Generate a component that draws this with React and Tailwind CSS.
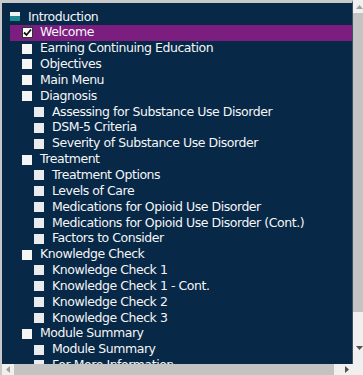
import React from 'react';

const rows = [
  { label: 'Introduction', level: 0 },
  { label: 'Welcome', level: 1, checked: true, active: true },
  { label: 'Earning Continuing Education', level: 1 },
  { label: 'Objectives', level: 1 },
  { label: 'Main Menu', level: 1 },
  { label: 'Diagnosis', level: 1 },
  { label: 'Assessing for Substance Use Disorder', level: 2 },
  { label: 'DSM-5 Criteria', level: 2 },
  { label: 'Severity of Substance Use Disorder', level: 2 },
  { label: 'Treatment', level: 1 },
  { label: 'Treatment Options', level: 2 },
  { label: 'Levels of Care', level: 2 },
  { label: 'Medications for Opioid Use Disorder', level: 2 },
  { label: 'Medications for Opioid Use Disorder (Cont.)', level: 2 },
  { label: 'Factors to Consider', level: 2 },
  { label: 'Knowledge Check', level: 1 },
  { label: 'Knowledge Check 1', level: 2 },
  { label: 'Knowledge Check 1 - Cont.', level: 2 },
  { label: 'Knowledge Check 2', level: 2 },
  { label: 'Knowledge Check 3', level: 2 },
  { label: 'Module Summary', level: 1 },
  { label: 'Module Summary', level: 2 },
  { label: 'For More Information', level: 2 },
];

const SectionIcon = () => (
  <span className="flex flex-col w-[10px] h-[9px] shrink-0">
    <span className="h-[4px] bg-[#eef2f2]" />
    <span className="flex-1 bg-[#1c8b95]" />
  </span>
);

const Box = ({ checked, level }) =>
  checked ? (
    <span className="w-[11px] h-[11px] shrink-0 bg-white border border-[#333] flex items-center justify-center">
      <svg width="9" height="9" viewBox="0 0 9 9">
        <path d="M1 4.5 L3.5 7 L8 1.5" fill="none" stroke="#111" strokeWidth="1.8" />
      </svg>
    </span>
  ) : (
    <span className={`w-[10px] h-[10px] shrink-0 ${level === 2 ? 'bg-[#e9ebed]' : 'bg-[#f5f5f5]'}`} />
  );

const Row = ({ row }) => {
  if (row.active) {
    return (
      <div className="h-[15.85px] flex items-center ml-[8px] pl-[12px] bg-[#7c1e7f]">
        <Box checked />
        <span className="whitespace-nowrap ml-[7px]">{row.label}</span>
      </div>
    );
  }
  const pad = row.level === 0 ? 'pl-[8px]' : row.level === 1 ? 'pl-[20px]' : 'pl-[32px]';
  return (
    <div className={`h-[15.85px] flex items-center ${pad}`}>
      {row.level === 0 ? <SectionIcon /> : <Box level={row.level} />}
      <span className="whitespace-nowrap ml-[8px]">{row.label}</span>
    </div>
  );
};

const Tri = ({ dir }) => {
  const pts = {
    up: '0,4 3.5,0 7,4',
    down: '0,0 7,0 3.5,4',
    left: '4,0 4,7 0,3.5',
    right: '0,0 4,3.5 0,7',
  }[dir];
  const vert = dir === 'up' || dir === 'down';
  return (
    <svg width={vert ? 7 : 4} height={vert ? 4 : 7} viewBox={vert ? '0 0 7 4' : '0 0 4 7'}>
      <polygon points={pts} fill={dir === 'up' || dir === 'left' ? '#a0a0a0' : '#505050'} />
    </svg>
  );
};

export default function App() {
  return (
    <div
      className="w-[363px] h-[375px] flex flex-col bg-[#f0f0f0] overflow-hidden"
      style={{ fontFamily: '"DejaVu Sans", Verdana, Tahoma, sans-serif' }}
    >
      <div className="flex h-[364px]">
        <div className="w-[353px] border-l-2 border-t-[3px] border-r border-l-[#c9c9c9] border-t-[#c9c9c9] border-r-[#3d5066] bg-[#072846] text-[#f4f6f8] text-[12.5px] tracking-[-0.45px] overflow-hidden pt-[6px]">
          {rows.map((r, i) => (
            <Row key={i} row={r} />
          ))}
        </div>
        <div className="flex-1 flex flex-col bg-[#f0f0f0]">
          <div className="h-[13px] flex items-center pl-[3px]">
            <Tri dir="up" />
          </div>
          <div className="h-[299px] bg-[#c3c3c3]" />
          <div className="flex-1" />
          <div className="h-[22px] flex items-start pt-[4px] pl-[3px]">
            <Tri dir="down" />
          </div>
        </div>
      </div>
      <div className="flex-1 flex items-stretch border-l-2 border-[#c9c9c9]">
        <div className="w-[12px] flex items-center justify-center">
          <Tri dir="left" />
        </div>
        <div className="w-[320px] bg-[#c3c3c3]" />
        <div className="w-[19px] flex items-center justify-end pr-[4px]">
          <Tri dir="right" />
        </div>
        <div className="flex-1 bg-[#f0f0f0]" />
      </div>
    </div>
  );
}
